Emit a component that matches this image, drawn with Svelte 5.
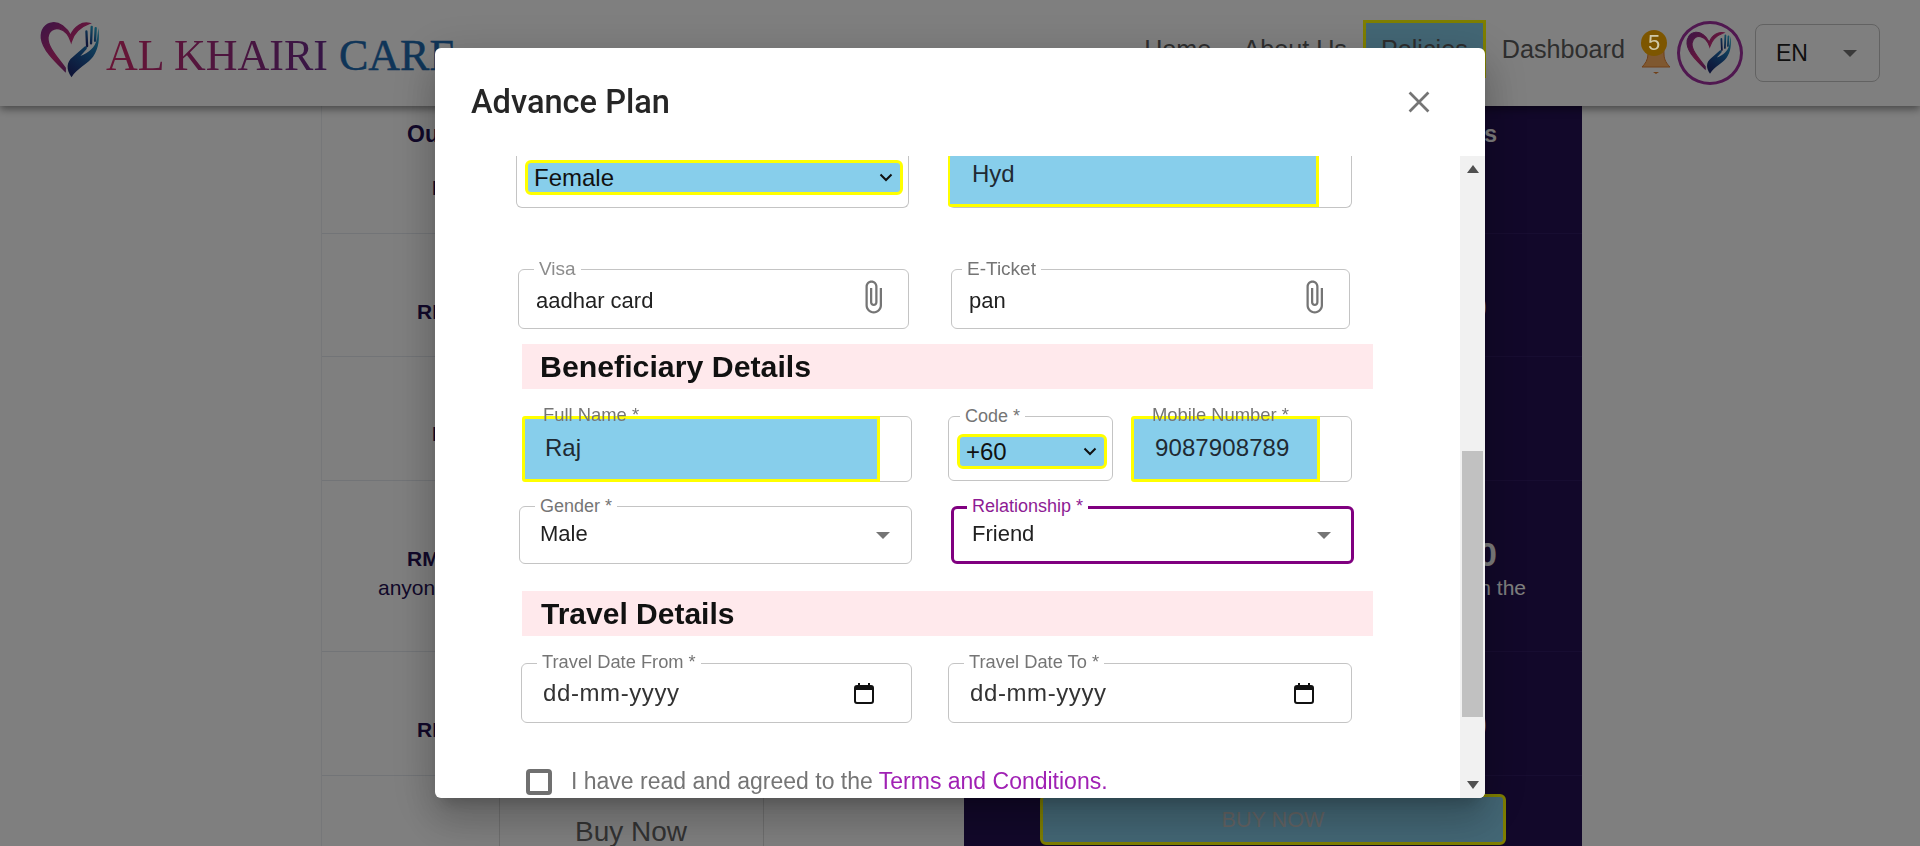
<script>
  const rows = [
    { height: 128, top: 16, left: "Inpatient Medical", right: "Inpatient Medical", half: 199, rhalf: 199, head: true },
    { height: 123, top: 66, left: "RM 100,000", right: "RM 100,000", half: 214, rhalf: 214 },
    { height: 124, top: 65, left: "Included", right: "Included", half: 199, rhalf: 150 },
    { height: 171, top: 66, left: "RM 150,000", right: "RM 150,000", half: 224, rhalf: 224, sub: true },
    { height: 124, top: 66, left: "RM 200,000", right: "RM 200,000", half: 214, rhalf: 214 }
  ];
</script>

{#snippet heart()}
  <svg viewBox="0 0 190 192" class="heart-svg">
    <defs>
      <linearGradient id="hg" x1="0" y1="0" x2="1" y2="1">
        <stop offset="0" stop-color="#7b2a8c" />
        <stop offset="0.5" stop-color="#c72a78" />
        <stop offset="1" stop-color="#3a2a80" />
      </linearGradient>
      <linearGradient id="hb" x1="0.8" y1="0" x2="0.3" y2="1">
        <stop offset="0" stop-color="#2aa6cc" />
        <stop offset="0.5" stop-color="#1b62a4" />
        <stop offset="1" stop-color="#1c2a70" />
      </linearGradient>
    </defs>
    <path fill="url(#hg)" stroke="url(#hg)" stroke-width="4" d="M92 52C80 28 58 12 38 14C14 16 2 38 4 60C8 95 45 130 76 160L76 150C50 115 22 85 24 58C26 38 42 28 58 32C74 36 88 52 94 72C102 44 122 26 150 16C128 10 104 24 92 52Z" />
    <path fill="url(#hb)" d="M95 178C78 155 80 132 98 118C110 108 122 96 134 86C140 82 144 88 140 94L122 114C146 104 166 90 172 62L176 30C180 60 178 92 160 116C144 138 112 150 95 178Z" />
    <path fill="none" stroke="url(#hb)" stroke-width="7" stroke-linecap="round" d="M142 84L140 40M154 76L156 26M166 68L168 30" />
  </svg>
{/snippet}

{#snippet caret()}
  <svg class="caret" viewBox="0 0 14 7"><path d="M0 0h14L7 7z" /></svg>
{/snippet}

{#snippet chevron()}
  <svg class="chevron" viewBox="0 0 14 9"><path d="M1.5 1.5L7 7l5.5-5.5" /></svg>
{/snippet}

{#snippet clip()}
  <svg class="clip" viewBox="0 0 24 24"><path d="M16.5 6v11.5c0 2.21-1.79 4-4 4s-4-1.79-4-4V5c0-1.38 1.12-2.5 2.5-2.5s2.5 1.12 2.5 2.5v10.5c0 .55-.45 1-1 1s-1-.45-1-1V6H10v9.5c0 1.38 1.12 2.5 2.5 2.5s2.5-1.12 2.5-2.5V5c0-2.21-1.79-4-4-4S7 2.79 7 5v12.5c0 3.04 2.46 5.5 5.5 5.5s5.5-2.46 5.5-5.5V6h-1.5z" /></svg>
{/snippet}

{#snippet calendar()}
  <svg class="calendar" viewBox="0 0 20 21">
    <rect x="1" y="3" width="18" height="17" rx="2" fill="none" stroke="#111" stroke-width="2" />
    <path d="M1 3h18v4H1zM4 0h2v4H4zM14 0h2v4h-2z" fill="#111" />
  </svg>
{/snippet}

<div class="page">
  <header class="topbar">
    <div class="logo">
      {@render heart()}
      <span class="brand"><span class="brand-a">AL KHAIRI</span> <span class="brand-b">CARE</span></span>
    </div>
    <nav class="nav">
      <span class="link">Home</span>
      <span class="link">About Us</span>
      <span class="link active">Policies</span>
      <span class="link">Dashboard</span>
      <div class="bell">
        <svg viewBox="0 0 30 40" class="bell-svg">
          <path d="M15 2C8 2 7 10 7 18C7 24 4 28 1 31H29C26 28 23 24 23 18C23 10 22 2 15 2Z" fill="#ffb060" stroke="#e08030" />
          <path d="M12 36h6l-3 2z" fill="#e08030" />
        </svg>
        <span class="badge">5</span>
      </div>
      <div class="avatar">{@render heart()}</div>
      <div class="lang"><span>EN</span>{@render caret()}</div>
    </nav>
  </header>

  <main class="plans">
    <section class="plan plain">
      {#each rows as r}
        <div class="plan-row" style="height:{r.height}px;padding-top:{r.top}px">
          {#if r.head}<div class="plan-text head" style="width:448px">Outstanding</div>{/if}
          <div class="plan-text" class:mt={r.head} style="width:{r.half * 2}px">{r.left}</div>
          {#if r.sub}<div class="plan-sub">anyone who travels in the</div>{/if}
        </div>
      {/each}
      <div class="buy-left">Buy Now</div>
    </section>
    <section class="plan dark">
      {#each rows as r}
        <div class="plan-row" style="height:{r.height}px;padding-top:{r.top}px">
          {#if r.head}<div class="plan-text head" style="width:448px">Benefits</div>{/if}
          <div class="plan-text big" class:mt={r.head} style="width:{r.rhalf * 2}px">{r.right}</div>
          {#if r.sub}<div class="plan-sub">anyone who travels in the</div>{/if}
        </div>
      {/each}
      <div class="buy-right">BUY NOW</div>
    </section>
  </main>
</div>

<div class="overlay">
  <div class="modal">
    <div class="modal-head">
      <h2>Advance Plan</h2>
      <svg class="close" viewBox="0 0 21 21"><path d="M1.5 1.5l18 18M19.5 1.5l-18 18" /></svg>
    </div>
    <div class="modal-body">
      <div class="content">
        <div class="row r1">
          <div class="field f393 cut">
            <div class="native-select wide"><span>Female</span>{@render chevron()}</div>
          </div>
          <div class="field f404 cut">
            <div class="filled hyd">Hyd</div>
          </div>
        </div>

        <div class="row r2">
          <div class="field f391 plainfield">
            <span class="label l-visa">Visa</span>
            <span class="value small">aadhar card</span>
            {@render clip()}
          </div>
          <div class="field f399 plainfield">
            <span class="label l-ticket">E-Ticket</span>
            <span class="value small pan">pan</span>
            {@render clip()}
          </div>
        </div>

        <div class="band">Beneficiary Details</div>

        <div class="row r3">
          <div class="field f390">
            <span class="label over l-full">Full Name *</span>
            <div class="filled name">Raj</div>
          </div>
          <div class="field f165 codefield">
            <span class="label l-code">Code *</span>
            <div class="native-select code"><span>+60</span>{@render chevron()}</div>
          </div>
          <div class="field f221">
            <span class="label over l-mobile">Mobile Number *</span>
            <div class="filled mobile">9087908789</div>
          </div>
        </div>

        <div class="row r4">
          <div class="field f393 plainfield">
            <span class="label l-gender">Gender *</span>
            <span class="value small pick">Male</span>
            {@render caret()}
          </div>
          <div class="field f403 plainfield focus">
            <span class="label l-rel">Relationship *</span>
            <span class="value small pick">Friend</span>
            {@render caret()}
          </div>
        </div>

        <div class="band travel">Travel Details</div>

        <div class="row r5">
          <div class="field f391 plainfield">
            <span class="label l-from">Travel Date From *</span>
            <span class="value date">dd-mm-yyyy</span>
            {@render calendar()}
          </div>
          <div class="field f404 plainfield">
            <span class="label l-to">Travel Date To *</span>
            <span class="value date">dd-mm-yyyy</span>
            {@render calendar()}
          </div>
        </div>

        <div class="agree">
          <span class="checkbox"></span>
          <span class="agree-text">I have read and agreed to the <span class="terms">Terms and Conditions.</span></span>
        </div>
      </div>

      <div class="scrollbar">
        <svg class="arrow" viewBox="0 0 12 8"><path d="M6 0l6 8H0z" /></svg>
        <div class="thumb"></div>
        <svg class="arrow down" viewBox="0 0 12 8"><path d="M0 0h12L6 8z" /></svg>
      </div>
    </div>
  </div>
</div>

<style>
  :global(body) {
    overflow: hidden;
    background: #fff;
    font-family: "Liberation Sans", Arial, sans-serif;
  }

  .page {
    height: 846px;
    overflow: hidden;
  }

  .topbar {
    height: 106px;
    box-sizing: border-box;
    display: flex;
    align-items: center;
    justify-content: space-between;
    padding: 0 40px;
    background: #fff;
    box-shadow: 0 3px 8px rgba(0, 0, 0, 0.45);
    position: relative;
  }

  .logo {
    display: flex;
    align-items: center;
    margin-bottom: 6px;
  }

  .logo .heart-svg {
    width: 63px;
    height: 64px;
    flex: none;
  }

  .brand {
    font-family: "Liberation Serif", serif;
    font-size: 44px;
    margin-left: 3px;
    margin-top: 10px;
    white-space: nowrap;
    -webkit-text-stroke: 0.5px currentColor;
  }

  .brand-a {
    background: linear-gradient(90deg, #d42a6c, #6a2a8c);
    -webkit-background-clip: text;
    background-clip: text;
    color: transparent;
    -webkit-text-stroke: 0;
  }

  .brand-b {
    color: #1f6bb0;
  }

  .nav {
    display: flex;
    align-items: center;
    font-size: 25.2px;
    color: #5c5c5c;
  }

  .link {
    padding: 0 16px;
    margin-bottom: 8px;
    height: 58px;
    line-height: 58px;
    box-sizing: border-box;
  }

  .active {
    border: 3px solid #ffff00;
    background: #87ceeb;
    padding: 0 15px;
    line-height: 52px;
  }

  .bell {
    width: 28px;
    height: 40px;
    margin-bottom: 0;
    position: relative;
    margin-top: 6px;
    margin-right: 0;
  }

  .bell-svg {
    width: 30px;
    height: 40px;
    display: block;
  }

  .badge {
    position: absolute;
    z-index: 1400;
    left: 0;
    top: -6px;
    width: 26px;
    height: 26px;
    border-radius: 50%;
    background: #7d5600;
    color: #cfc8a8;
    font-size: 22px;
    line-height: 26px;
    text-align: center;
  }

  .avatar {
    width: 66px;
    height: 64px;
    margin-left: 8px;
    box-sizing: border-box;
    border: 3px solid #a030a0;
    border-radius: 50%;
    display: flex;
    align-items: center;
    justify-content: center;
  }

  .avatar .heart-svg {
    width: 48px;
    height: 50px;
  }

  .lang {
    width: 125px;
    height: 58px;
    margin-left: 12px;
    box-sizing: border-box;
    border: 1px solid #c4c4c4;
    border-radius: 8px;
    display: flex;
    align-items: center;
    justify-content: space-between;
    padding: 0 22px 0 20px;
    font-size: 23px;
    color: #212121;
  }

  .caret {
    width: 14px;
    height: 7px;
    flex: none;
    fill: #757575;
  }

  .plans {
    display: grid;
    grid-template-columns: 643px 618px;
    padding-left: 321px;
  }

  .plan {
    display: flex;
    flex-direction: column;
    height: 740px;
  }

  .plain {
    padding-right: 24px;
    border-left: 1px solid #eceff2;
    box-sizing: border-box;
    color: #241054;
  }

  .dark {
    background: #241054;
    color: #fff;
  }

  .plan-row {
    box-sizing: border-box;
    display: flex;
    flex-direction: column;
    align-items: center;
    border-bottom: 1px solid #e4e8ee;
    flex: none;
  }

  .dark .plan-row {
    border-bottom-color: #2f1a62;
  }

  .plan-text {
    font-weight: 700;
    font-size: 21px;
    line-height: 24px;
    white-space: nowrap;
  }

  .head {
    font-size: 23px;
  }

  .dark .plan-text {
    text-align: right;
  }

  .dark .big {
    font-size: 34px;
    line-height: 30px;
    margin-top: -8px;
  }

  .dark .big.mt {
    margin-top: 30px;
  }

  .mt {
    margin-top: 30px;
  }

  .plan-sub {
    width: 506px;
    font-size: 21px;
    line-height: 24px;
    margin-top: 5px;
    white-space: nowrap;
  }

  .dark .plan-sub {
    text-align: right;
    margin-top: 7px;
  }

  .buy-left {
    width: 265px;
    height: 70px;
    align-self: center;
    flex: none;
    box-sizing: border-box;
    border: 1px solid #ddd;
    border-bottom: 0;
    padding-top: 41px;
    line-height: 28px;
    text-align: center;
    font-size: 28px;
    color: #666;
  }

  .buy-right {
    width: 466px;
    height: 51px;
    flex: none;
    margin: 18px auto 0;
    box-sizing: border-box;
    border: 3px solid #ffff00;
    border-radius: 6px;
    background: #87ceeb;
    color: #c8c8c8;
    font-size: 21.6px;
    line-height: 45px;
    text-align: center;
  }

  .overlay {
    position: fixed;
    inset: 0;
    z-index: 1300;
    background: rgba(0, 0, 0, 0.5);
    display: flex;
    align-items: center;
    justify-content: center;
  }

  .modal {
    width: 1050px;
    height: 750px;
    background: #fff;
    border-radius: 6px;
    overflow: hidden;
    display: flex;
    flex-direction: column;
    box-shadow: 0 11px 15px -7px rgba(0, 0, 0, 0.2), 0 24px 38px 3px rgba(0, 0, 0, 0.14), 0 9px 46px 8px rgba(0, 0, 0, 0.12);
    color: #212121;
  }

  .modal-head {
    height: 108px;
    flex: none;
    display: flex;
    align-items: center;
    justify-content: space-between;
    padding: 0 55px 0 36px;
  }

  h2 {
    margin: 0;
    font-family: Roboto, sans-serif;
    font-weight: 500;
    font-size: 32.6px;
    color: #262626;
  }

  .close {
    width: 22px;
    height: 22px;
    stroke: #757575;
    stroke-width: 2.6;
    fill: none;
  }

  .modal-body {
    flex: 1;
    display: flex;
    min-height: 0;
  }

  .content {
    flex: 1;
    overflow: hidden;
  }

  .row {
    display: flex;
  }

  .r1 {
    margin-left: 81px;
    gap: 39px;
    height: 52px;
  }

  .r2 {
    margin-top: 61px;
    margin-left: 83px;
    gap: 42px;
    height: 60px;
  }

  .r2 .small {
    margin-top: 3px;
  }

  .r3 {
    margin-top: 27px;
    margin-left: 87px;
    height: 66px;
  }

  .r3 .f165 {
    margin: 0 18px 0 36px;
    height: 65px;
  }

  .r4 {
    margin-top: 24px;
    margin-left: 84px;
    gap: 39px;
    height: 58px;
  }

  .r5 {
    margin-top: 27px;
    margin-left: 86px;
    gap: 36px;
    height: 60px;
  }

  .field {
    position: relative;
    box-sizing: border-box;
    border: 1px solid #c4c4c4;
    border-radius: 6px;
    display: flex;
  }

  .cut {
    border-top: 0;
    border-top-left-radius: 0;
    border-top-right-radius: 0;
  }

  .f165 { width: 165px; }
  .f221 { width: 221px; }
  .f390 { width: 390px; }
  .f391 { width: 391px; }
  .f393 { width: 393px; }
  .f399 { width: 399px; }
  .f403 { width: 403px; }
  .f404 { width: 404px; }

  .plainfield {
    align-items: center;
    justify-content: space-between;
  }

  .focus {
    border: 3px solid #800080;
    margin-left: 0;
  }

  .label {
    position: absolute;
    top: -11px;
    font-size: 18px;
    line-height: 20px;
    padding: 0 5px;
    background: #fff;
    color: #757575;
    white-space: nowrap;
  }

  .label.over {
    background: none;
    top: -12px;
    z-index: 1;
    font-size: 18.4px;
  }

  .l-visa { left: 15px; color: #8c8c8c; font-size: 19px; }
  .l-ticket { left: 10px; font-size: 19px; }
  .l-full { left: 15px; }
  .l-code { left: 11px; }
  .l-mobile { left: 15px; }
  .l-gender { left: 15px; }
  .l-rel { left: 13px; top: -13px; color: #8e1b94; }
  .l-from { left: 15px; top: -12px; font-size: 18.3px; }
  .l-to { left: 15px; top: -12px; font-size: 18.3px; }

  .value {
    color: #212121;
    white-space: nowrap;
  }

  .small {
    font-size: 22px;
    margin-left: 17px;
  }

  .pan {
    margin-left: 17px;
  }

  .pick {
    margin-left: 20px;
    margin-top: -2px;
  }

  .focus .pick {
    margin-left: 18px;
    margin-top: -3px;
  }

  .plainfield .caret {
    margin-right: 21px;
  }

  .focus.plainfield .caret {
    margin-right: 20px;
  }

  .clip {
    width: 36px;
    height: 36px;
    fill: #757575;
    margin-right: 17px;
    margin-top: -4px;
  }

  .date {
    font-size: 24px;
    letter-spacing: 0.6px;
    margin-left: 21px;
    color: #333;
  }

  .calendar {
    width: 20px;
    height: 21px;
    margin-right: 37px;
  }

  .native-select {
    box-sizing: border-box;
    border: 3px solid #ffff00;
    border-radius: 6px;
    background: #87ceeb;
    color: #111;
    font-size: 24px;
    display: flex;
    align-items: center;
    justify-content: space-between;
  }

  .native-select.wide {
    width: 378px;
    height: 35px;
    margin: 4px 0 0 8px;
    padding: 0 7px 0 6px;
  }

  .native-select.code {
    width: 150px;
    height: 35px;
    margin: 17px 0 0 8px;
    padding: 0 7px 0 6px;
  }

  .chevron {
    width: 14px;
    height: 9px;
    flex: none;
    fill: none;
    stroke: #111;
    stroke-width: 2;
  }

  .filled {
    box-sizing: border-box;
    background: #87ceeb;
    border: 3px solid #ffff00;
    color: #1f2a33;
    font-size: 24px;
    display: flex;
    align-items: center;
    white-space: nowrap;
    margin: -1px 0 -1px -1px;
    border-radius: 3px 0 0 3px;
  }

  .hyd {
    width: 371px;
    height: 52px;
    border-top: 0;
    border-left-width: 2px;
    padding: 0 0 11px 22px;
  }

  .name {
    width: 358px;
    padding-left: 20px;
    padding-bottom: 3px;
  }

  .mobile {
    width: 189px;
    padding-left: 21px;
    padding-bottom: 3px;
    letter-spacing: 0.1px;
  }

  .band {
    margin: 15px 0 0 87px;
    width: 851px;
    height: 45px;
    box-sizing: border-box;
    background: #ffe9ec;
    padding-left: 18px;
    font-weight: 700;
    font-size: 30.3px;
    line-height: 45px;
    color: #111;
  }

  .travel {
    margin-top: 27px;
    padding-left: 19px;
    font-size: 30px;
  }

  .agree {
    margin: 45px 0 0 91px;
    display: flex;
    align-items: center;
    gap: 19px;
  }

  .checkbox {
    width: 26px;
    height: 26px;
    box-sizing: border-box;
    border: 4px solid #707070;
    border-radius: 4px;
    flex: none;
  }

  .agree-text {
    font-size: 23px;
    color: #757575;
    white-space: nowrap;
  }

  .terms {
    color: #a021b4;
  }

  .scrollbar {
    width: 25px;
    flex: none;
    background: #f1f1f1;
    display: flex;
    flex-direction: column;
    align-items: center;
    padding: 9px 0;
    box-sizing: border-box;
  }

  .arrow {
    width: 12px;
    height: 8px;
    flex: none;
    fill: #505050;
  }

  .arrow.down {
    margin-top: auto;
  }

  .thumb {
    width: 21px;
    height: 266px;
    margin-top: 278px;
    background: #c1c1c1;
  }
</style>
